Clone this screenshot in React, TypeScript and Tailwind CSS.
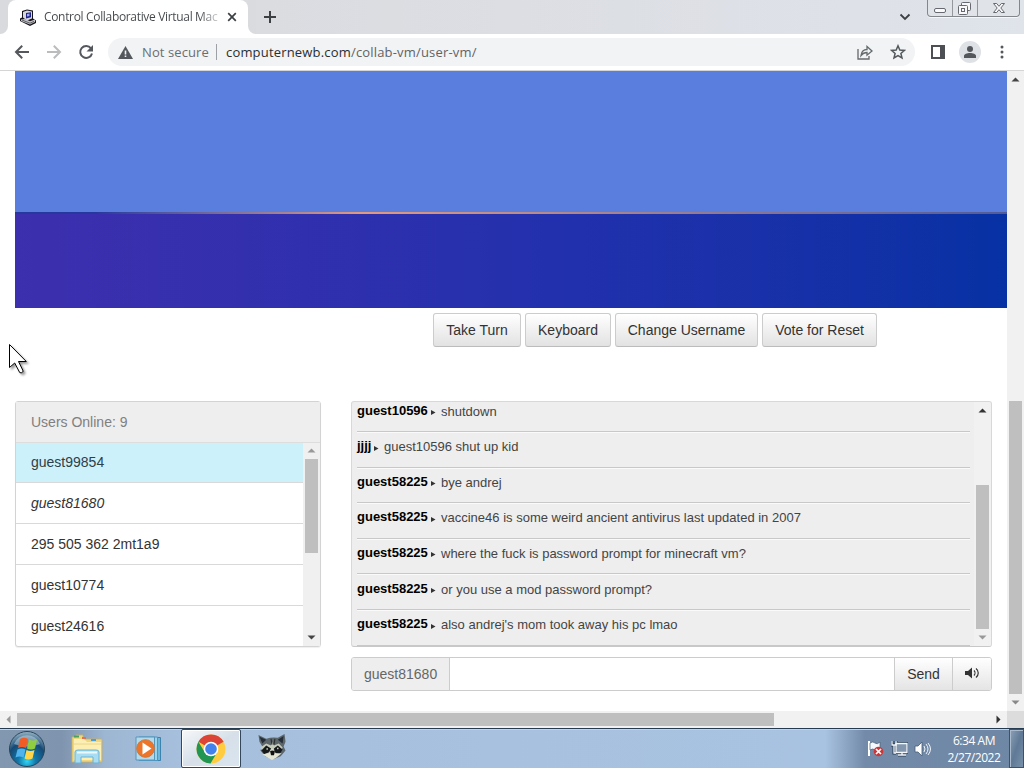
import React from "react";

const users = ["guest99854", "guest81680", "295 505 362 2mt1a9", "guest10774", "guest24616"];

const messages = [
  ["guest10596", "shutdown"],
  ["jjjj", "guest10596 shut up kid"],
  ["guest58225", "bye andrej"],
  ["guest58225", "vaccine46 is some weird ancient antivirus last updated in 2007"],
  ["guest58225", "where the fuck is password prompt for minecraft vm?"],
  ["guest58225", "or you use a mod password prompt?"],
  ["guest58225", "also andrej's mom took away his pc lmao"],
];

function Arrow({ dir, color }: { dir: "up" | "down" | "left" | "right"; color: string }) {
  const d = {
    up: "M4.500 10.500h8L8.500 6.500z",
    down: "M4.500 6.500h8L8.500 10.500z",
    left: "M10.500 4.500v8L6.500 8.500z",
    right: "M6.500 4.500v8L10.500 8.500z",
  }[dir];
  return (
    <svg className="block h-[17px] w-[17px] shrink-0" viewBox="0 0 17 17">
      <path d={d} fill={color} />
    </svg>
  );
}

function Favicon() {
  return (
    <svg className="h-[17px] w-[18px] shrink-0" viewBox="0 0 18 17">
      <path d="M3 2 8 0.500l6 1v8l3 2v2.500l-6 3L1 12V9.500l2-1z" fill="#15151b" />
      <path d="m4 3 4-1.500 5 1v7l-5 2-4-3z" fill="#d8d8dc" />
      <path d="m7 4 5-.8v5L7 9.500z" fill="#20258c" />
      <path d="m8 5 2.500-.5V7L8 7.500z" fill="#9eaaf0" />
      <path d="m2 10.500 4-.5 5 2.200 5-1.700v2.500l-5 2.500-9-3.500z" fill="#c4c4c8" />
      <path d="m3 11 8 3.200 4-1.800" stroke="#44444a" fill="none" strokeWidth=".8" />
    </svg>
  );
}

function TabStrip() {
  return (
    <div className="flex h-[34px] bg-linear-to-r from-[#d8dade] via-[#dcdee3] to-[#dfe3ea]">
      <div className="flex w-[8px] items-end bg-white">
        <div className="h-[34px] w-[8px] rounded-br-lg bg-[#d8dade]" />
      </div>
      <div className="flex w-[240px] items-center rounded-t-lg bg-white pl-[11px]">
        <Favicon />
        <div className="ml-[7px] h-[18px] w-[176px] whitespace-nowrap bg-linear-to-r from-[#42464a] from-88% to-[#e4e4e4] bg-clip-text font-['Open_Sans',sans-serif] text-[12px] leading-[18px] tracking-[-0.330px] text-transparent">
          Control Collaborative Virtual Mac
        </div>
        <svg className="ml-[7px] h-[10px] w-[10px]" viewBox="0 0 10 10">
          <path d="m1.200 1.200 7.600 7.600m0-7.600L1.200 8.800" stroke="#3c4043" strokeWidth="1.700" />
        </svg>
      </div>
      <div className="flex w-[8px] bg-white">
        <div className="h-[34px] w-[8px] rounded-bl-lg bg-[#d9dbdf]" />
      </div>
      <svg className="ml-[7px] mt-[10px] h-[14px] w-[14px]" viewBox="0 0 14 14">
        <path d="M7 1v12M1 7h12" stroke="#3c4043" strokeWidth="2" />
      </svg>
      <div className="grow" />
      <svg className="mr-[16px] mt-[13px] h-[8px] w-[12px]" viewBox="0 0 12 8">
        <path d="m1.500 1.500 4.500 4.500 4.500-4.500" fill="none" stroke="#3c4043" strokeWidth="1.800" />
      </svg>
      <div className="mr-[4px] flex h-[17px] w-[93px] rounded-b-[4px] border border-t-0 border-[#83868b] bg-[#e0e3e8] shadow-[0_1px_0_#f5f6f8]">
        <div className="w-[25px] border-r border-[#94979c]">
          <svg className="h-[16px] w-[24px]" viewBox="0 0 24 16">
            <rect x="6.500" y="8.500" width="11" height="4" rx="1.500" fill="#fafafa" stroke="#666a70" />
          </svg>
        </div>
        <div className="w-[25px] border-r border-[#94979c]">
          <svg className="h-[16px] w-[24px]" viewBox="0 0 24 16" fill="#f8f8f8" stroke="#666a70">
            <rect x="8.500" y="2.500" width="9" height="8" rx="1" />
            <rect x="5.500" y="5.500" width="9" height="9" rx="1" />
            <rect x="8.500" y="8.500" width="3" height="3" />
          </svg>
        </div>
        <svg className="h-[16px] w-[41px]" viewBox="0 0 41 16">
          <path d="M15.500 3.500h3.200l2.300 2.800 2.300-2.800h3.200l-3.700 4.500 3.700 4.500h-3.200L21 9.700l-2.300 2.800h-3.200L19.200 8z" fill="#f8f8f8" stroke="#666a70" />
        </svg>
      </div>
    </div>
  );
}

function Toolbar() {
  return (
    <div className="flex h-[36px] items-center bg-white pl-[14px] font-['Open_Sans',sans-serif]">
      <svg className="h-[16px] w-[16px]" viewBox="0 0 16 16" fill="none" stroke="#54585d" strokeWidth="2">
        <path d="M15 8H2m6.200-6.200L2 8l6.200 6.200" />
      </svg>
      <svg className="ml-[16px] h-[16px] w-[16px]" viewBox="0 0 16 16" fill="none" stroke="#babcbe" strokeWidth="2">
        <path d="M1 8h13M7.800 1.800 14 8l-6.200 6.200" />
      </svg>
      <svg className="ml-[16px] h-[16px] w-[16px]" viewBox="0 0 16 16">
        <path d="M13 4.300A6 6 0 1 0 14 9.500" fill="none" stroke="#54585d" strokeWidth="2" />
        <path d="M15 1v6.500H8.500z" fill="#54585d" />
      </svg>
      <div className="ml-[14px] flex h-[28px] w-[807px] items-center rounded-full bg-[#f1f3f4] pl-[10px]">
        <svg className="h-[13px] w-[15px]" viewBox="0 0 15 13">
          <path d="M7.500 0 15 13H0z" fill="#54585d" />
          <path d="M6.700 4.500h1.600v4H6.700zm0 5h1.600V11H6.700z" fill="#f1f3f4" />
        </svg>
        <span className="ml-[9px] w-[68px] whitespace-nowrap text-[13px] leading-[18px] tracking-[0.100px] text-[#6a6e72]">Not secure</span>
        <div className="ml-[6px] h-[16px] w-px bg-[#9da0a4]" />
        <span className="ml-[9px] whitespace-nowrap text-[13px] leading-[18px] tracking-[0.180px] text-[#2b2e32]">
          computernewb.com<span className="text-[#5f6368]">/collab-vm/user-vm/</span>
        </span>
        <div className="grow" />
        <svg className="mr-[17px] h-[15px] w-[16px]" viewBox="0 0 16 15" fill="none" stroke="#66696d" strokeWidth="1.300">
          <path d="M1 4v10h11v-3" />
          <path d="M4 10.500c.5-4 2.500-6 6-6V1.500L15 6l-5 4.200V7.500c-3 0-4.500 1-6 3z" />
        </svg>
        <svg className="mr-[9px] h-[16px] w-[16px]" viewBox="0 0 16 16">
          <path d="m8 1.800 1.800 4.200 4.600.4-3.500 3 1.100 4.500L8 11.500l-4 2.400 1.100-4.500-3.500-3L6.200 6z" fill="none" stroke="#54585d" strokeWidth="1.500" />
        </svg>
      </div>
      <svg className="ml-[16px] h-[14px] w-[14px]" viewBox="0 0 14 14">
        <path d="M1 1h12v12H1z" fill="none" stroke="#4c5054" strokeWidth="2" />
        <path d="M9 1h5v12H9z" fill="#4c5054" />
      </svg>
      <svg className="ml-[14px] h-[22px] w-[22px]" viewBox="0 0 22 22">
        <circle cx="11" cy="11" r="11" fill="#dee1e6" />
        <circle cx="11" cy="8" r="3" fill="#54585d" />
        <path d="M5 17v-2c0-4 12-4 12 0v2z" fill="#54585d" />
      </svg>
      <svg className="ml-[19px] h-[14px] w-[4px]" viewBox="0 0 4 14" fill="#54585d">
        <circle cx="2" cy="2" r="1.500" />
        <circle cx="2" cy="7" r="1.500" />
        <circle cx="2" cy="12" r="1.500" />
      </svg>
    </div>
  );
}

function Button({ width, children }: { width: string; children: string }) {
  return (
    <button className={`${width} h-[34px] whitespace-nowrap rounded-[3px] border border-[#ccc] border-b-[#bcbcbc] bg-linear-to-b from-white to-[#e2e2e2] pb-px text-[14px] leading-[20px] text-[#333]`}>
      {children}
    </button>
  );
}

function UserPanel() {
  return (
    <div className="flex h-[246px] w-[306px] flex-col rounded-[3px] border border-[#d3d3d3] bg-white shadow-[0_1px_1px_#0001]">
      <div className="h-[41px] border-b border-[#ddd] bg-[#eee] px-[15px] pt-[10px] text-[14px] leading-[20px] text-[#808080]">
        Users Online: 9
      </div>
      <div className="flex h-[203px]">
        <div className="w-[287px]">
          {users.map((user, i) => (
            <div
              key={user}
              className={`border-b border-[#d9d9d9] pl-[15px] text-[14px] leading-[20px] ${i === 0 ? "h-[40px] bg-[#cdf1fb] pt-[9px] text-[#2c4049]" : "h-[41px] pt-[10px] text-[#333]"} ${i === 1 ? "italic" : ""} ${i === 4 ? "border-b-0" : ""}`}
            >
              {user}
            </div>
          ))}
        </div>
        <div className="flex w-[17px] flex-col items-center bg-[#f0f0f0]">
          <div className="-mt-px">
            <Arrow dir="up" color="#999" />
          </div>
          <div className="h-[94px] w-[13px] bg-[#bfbfbf]" />
          <div className="grow" />
          <Arrow dir="down" color="#444" />
        </div>
      </div>
    </div>
  );
}

function ChatPanel() {
  return (
    <div className="flex h-[246px] w-[641px] overflow-hidden rounded-[3px] border border-[#d8d8d8] border-b-[#c8c8c8] bg-[#eee]">
      <div className="flex w-[618px] shrink-0 flex-col pl-[5px]">
        {messages.map(([name, text], i) => (
          <div
            key={i}
            className={`flex shrink-0 items-end whitespace-nowrap border-b border-[#c8c8c8] text-[13px] leading-[18px] shadow-[0_1px_0_#fafafa] ${i === 0 ? "h-[30px]" : "h-[35.620px]"}`}
          >
            <span className={`mb-[11.400px] font-bold text-black ${name === "jjjj" ? "w-[15px]" : "w-[72px]"}`}>{name}</span>
            <svg className="mb-[15px] ml-[2px] h-[8px] w-[5px]" viewBox="0 0 5 8">
              <path d="M0 2v5l4.500-2.500z" fill="#333" />
            </svg>
            <span className={`mb-[10.400px] text-[#444] ${name === "jjjj" ? "ml-[5px]" : "ml-[5px]"}`}>{text}</span>
          </div>
        ))}
      </div>
      <div className="ml-[4px] flex w-[17px] shrink-0 flex-col items-center bg-[#f1f1f1]">
        <Arrow dir="up" color="#333" />
        <div className="grow" />
        <div className="h-[144px] w-[13px] bg-[#bfbfbf]" />
        <Arrow dir="down" color="#999" />
      </div>
    </div>
  );
}

function ChatInput() {
  return (
    <div className="mt-[10px] flex h-[34px] w-[641px] overflow-hidden rounded-[3px] border border-[#ccc] text-[14px] leading-[20px]">
      <div className="w-[98px] border-r border-[#ccc] bg-[#eee] pl-[12px] pt-[6px] text-[#666]">guest81680</div>
      <div className="grow bg-white" />
      <div className="w-[58px] border-l border-[#ccc] bg-linear-to-b from-white to-[#e4e4e4] pt-[6px] text-center text-[#333]">Send</div>
      <div className="flex w-[39px] items-center justify-center border-l border-[#ccc] bg-linear-to-b from-white to-[#e4e4e4] pb-[2px]">
        <svg className="h-[12px] w-[14px]" viewBox="0 0 14 12">
          <path d="M0 4h3l4-3.500v11L3 8H0z" fill="#333" />
          <path d="M9 3.500c1.300 1.300 1.300 3.700 0 5M11 1.500c3 2.500 3 6.500 0 9" stroke="#333" fill="none" strokeWidth="1.200" />
        </svg>
      </div>
    </div>
  );
}

function Page() {
  return (
    <div className="flex h-[641px] border-t border-[#d4d5d7]">
      <div className="relative w-[1007px] bg-white font-['Liberation_Sans',sans-serif]">
        <div className="ml-[15px] h-[141px] bg-[#5a7edd]" />
        <div className="ml-[15px] h-[2px] bg-linear-to-r from-[#26379d] from-8% via-[#e39a7c] via-35% to-[#525a96]" />
        <div className="ml-[15px] h-[94px] bg-linear-to-r from-[#3d2fae] via-[#2230ad] via-55% to-[#0631a4]" />
        <div className="mt-[5px] flex gap-[4px] pl-[433px]">
          <Button width="w-[88px]">Take Turn</Button>
          <Button width="w-[86px]">Keyboard</Button>
          <Button width="w-[143px]">Change Username</Button>
          <Button width="w-[115px]">Vote for Reset</Button>
        </div>
        <div className="mt-[54px] flex gap-[30px] pl-[15px]">
          <UserPanel />
          <div>
            <ChatPanel />
            <ChatInput />
          </div>
        </div>
        <svg className="absolute left-[8px] top-[272px] h-[34px] w-[24px] drop-shadow-[2px_2px_1px_#0006]" viewBox="0 0 24 34">
          <path d="M1.500 1.500v23l5.200-4.500 5 9.500q1.500 1 3-.5 .8-.7 0-2L10.500 18.500h7.800z" fill="#fff" stroke="#000" />
        </svg>
      </div>
      <div className="flex w-[17px] flex-col items-center bg-[#f1f1f1]">
        <Arrow dir="up" color="#444" />
        <div className="h-[313px]" />
        <div className="h-[293px] w-[13px] bg-[#bfbfbf]" />
        <Arrow dir="down" color="#888" />
      </div>
    </div>
  );
}

function StartOrb() {
  return (
    <svg className="ml-[8px] h-[38px] w-[38px]" viewBox="0 0 38 38">
      <defs>
        <radialGradient id="orb" cx="50%" cy="85%" r="85%">
          <stop offset="0" stopColor="#31d5f5" />
          <stop offset=".3" stopColor="#1177a8" />
          <stop offset=".65" stopColor="#164a75" />
          <stop offset="1" stopColor="#9ab6c9" />
        </radialGradient>
      </defs>
      <circle cx="19" cy="19" r="17.500" fill="url(#orb)" stroke="#294558" />
      <path d="M6 14A14 14 0 0 1 32 14Q19 19 6 14z" fill="#d4e7ef" opacity=".45" />
      <path d="M12 9q4-2.500 8 0l-2 9q-4-2-8 0z" fill="#f45c25" />
      <path d="M21 9.500q4 2 8 0l-2 9q-4 2-8 0z" fill="#91ce3f" />
      <path d="M9.500 19.500q4-2 8 0l-2 8q-4-2-8 0z" fill="#4fb4ed" />
      <path d="M18.500 20q4 2 8 0l-2 8.500q-4 2-8 0z" fill="#ffd64a" />
    </svg>
  );
}

function Explorer() {
  return (
    <svg className="ml-[24px] h-[30px] w-[34px]" viewBox="0 0 34 30">
      <path d="M2 3h4V1h7v2h1v2h18v23H2z" fill="#efd67f" stroke="#cdb05a" strokeWidth=".8" />
      <path d="M4 5h10l3 3h14v18H4z" fill="#fbefb4" />
      <path d="M4 1.500h5v2H4z" fill="#4ba15c" />
      <path d="M12 3h4v2h-4z" fill="#e86f4e" />
      <path d="M21 5h5v2h-5z" fill="#4c9ed8" />
      <path d="M3 10h28" stroke="#ecd588" />
      <path d="M5 29V18q0-2 3-2h18q3 0 3 2v11h-6v-6H11v6z" fill="#a8dcf1" stroke="#6bb3d6" />
      <path d="M7 18.500h20" stroke="#e8faff" strokeWidth="2" />
    </svg>
  );
}

function MediaPlayer() {
  return (
    <svg className="ml-[31px] h-[26px] w-[28px]" viewBox="0 0 28 26">
      <path d="M7 1.500h18.500v23H7z" fill="#6db7dc" stroke="#3c83ae" />
      <path d="M4 1h18.500v23.500H4z" fill="#9bd3eb" stroke="#4c97c1" />
      <path d="M1 1h18.500v23H1z" fill="#b4d9ea" stroke="#5796bb" />
      <circle cx="10.500" cy="12.500" r="8.800" fill="#ed752a" stroke="#d5752f" />
      <path d="m7.500 6.500 9 6-9 6z" fill="#fff" />
    </svg>
  );
}

function ChromeLogo() {
  return (
    <svg className="h-[30px] w-[30px]" viewBox="0 0 30 30">
      <circle cx="15" cy="15" r="14.500" fill="#ffcc40" />
      <path d="M15 15 2.400 7.800A14.500 14.500 0 0 1 27.600 7.800z" fill="#dc4437" />
      <path d="M2.400 7.800A14.500 14.500 0 0 0 14.500 29.500L21.100 18.500 15 15 8.900 18.500z" fill="#219653" />
      <circle cx="15" cy="15" r="7.300" fill="#fff" />
      <circle cx="15" cy="15" r="5.800" fill="#4381ec" />
    </svg>
  );
}

function Raccoon() {
  return (
    <svg className="ml-[16px] mb-[4px] h-[28px] w-[30px]" viewBox="0 0 30 29">
      <path d="m1 2 8 4q6-2 12-1l7-4 1 8-2 5 2 4-5 6-7 3q-5 0-9-3l-5-6 2-4-3-5z" fill="#5c666b" />
      <path d="m2 4 7 3-4 4zM27 3l-6 4 5 4z" fill="#252e38" />
      <path d="m3 15 6-4 5 2 1-4 2 4 5-2 4 4-3 6-6 2-2-4-3 4-6-2z" fill="#c6ccbb" />
      <path d="m4 18 5-5 5 3-2 4-5 2zM26 17l-5-4-4 3 1 5 5 1z" fill="#15191b" />
      <path d="m5 22 7-1 3-5 4 5 6 0-6 5-4 2-4-2z" fill="#e4e5d3" />
      <path d="M13 19q2-2 5 0l-1 4h-3z" fill="#111" />
      <circle cx="10" cy="16.500" r=".9" fill="#c2c7ad" />
      <circle cx="21" cy="16" r=".9" fill="#c2c7ad" />
      <path d="m14 6 1 6m3-6-1 6" stroke="#2c3332" strokeWidth="1.200" />
    </svg>
  );
}

function Taskbar() {
  return (
    <div className="flex h-[40px] items-center border-t border-[#253b51] bg-[linear-gradient(90deg,#8298b1_0px,#7f94ae_62px,#9db6d2_105px,#a6bfdc_180px,#a8c3e1_825px,#738ba8_865px,#6e87a4_1024px)] shadow-[inset_0_1px_#c5d4e5]">
      <StartOrb />
      <Explorer />
      <MediaPlayer />
      <div className="ml-[18px] flex h-[39px] w-[60px] items-center justify-center rounded-[2px] border border-[#34475c] bg-linear-to-br from-[#f6f8fa] via-[#d7e0e9] to-[#d9e5ef] shadow-[inset_0_0_0_1px_#fff]">
        <ChromeLogo />
      </div>
      <Raccoon />
      <div className="grow" />
      <svg className="h-[17px] w-[17px]" viewBox="0 0 17 17">
        <path d="M2 1v15" stroke="#fff" strokeWidth="2" />
        <path d="M3 3q3-2 5 0t5-1v8q-3 2-5 0t-5 0z" fill="#f5f8fc" stroke="#495e75" strokeWidth=".7" />
        <circle cx="11.500" cy="11.500" r="4.800" fill="#cd3638" />
        <path d="m9 9 5 5m0-5-5 5" stroke="#fff" strokeWidth="1.700" />
      </svg>
      <svg className="ml-[7px] h-[17px] w-[17px]" viewBox="0 0 17 17" fill="none">
        <path d="M5 3.500h11v9H5zM7 15h8M1 1v4h4V1M3 5v8h2" stroke="#263b51" strokeWidth="3" />
        <path d="M5 3.500h11v9H5z" fill="#8297ae" stroke="#f4f7fb" strokeWidth="1.300" />
        <path d="M7 15h8m-4-3v3M1 1v4h4V1M3 5v8h2" stroke="#f4f7fb" strokeWidth="1.300" />
      </svg>
      <svg className="ml-[6px] h-[16px] w-[18px]" viewBox="0 0 18 16">
        <path d="M1 5h3l4-4v14l-4-4H1z" fill="#fff" stroke="#465d76" strokeWidth=".8" />
        <path d="M10 5q2 3 0 6m2-8q4 5 0 10m2-11q5 6 0 12" fill="none" stroke="#eef4fb" />
      </svg>
      <div className="ml-[10px] h-[34px] w-[64px] whitespace-nowrap text-center font-['Open_Sans',sans-serif] text-[12px] leading-[17px] tracking-[-0.450px] text-white">
        <div>6:34 AM</div>
        <div>2/27/2022</div>
      </div>
      <div className="ml-[3px] h-[39px] w-[15px] border border-[#3d5269] bg-linear-to-br from-[#8da1b7] via-[#5f7996] to-[#7890aa] shadow-[inset_1px_1px_#a8bacb]" />
    </div>
  );
}

export default function App() {
  return (
    <div className="flex h-[768px] w-[1024px] flex-col overflow-hidden bg-white">
      <TabStrip />
      <Toolbar />
      <Page />
      <div className="flex h-[17px] items-center bg-[#f1f1f1]">
        <Arrow dir="left" color="#999" />
        <div className="h-[13px] w-[757px] bg-[#bfbfbf]" />
        <div className="grow" />
        <Arrow dir="right" color="#333" />
        <div className="h-[17px] w-[17px] bg-[#dcdcdc]" />
      </div>
      <Taskbar />
    </div>
  );
}
